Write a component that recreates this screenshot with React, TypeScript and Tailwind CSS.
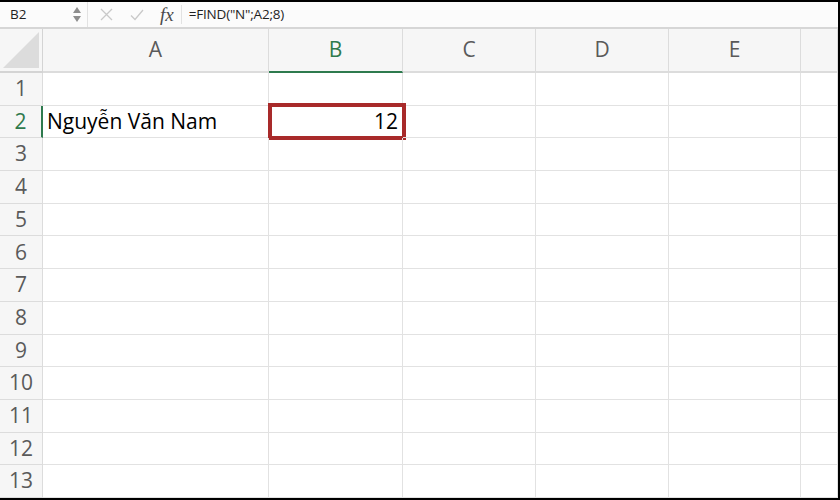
import React from 'react';

const cols = ['A', 'B', 'C', 'D', 'E', ''];
const rows = Array.from({ length: 13 }, (_, i) => i + 1);

const FormulaBar: React.FC = () => (
  <div className="flex h-[27px] shrink-0 items-center bg-[#fbfbfb] border-b-2 border-[#d6d6d6] text-[13.5px] text-[#1f1f1f]">
    <div className="flex h-full w-[88px] shrink-0 items-center border-r border-[#e2e2e2] pl-[10px] pr-[6px]">
      <span className="flex-1">B2</span>
      <div className="flex flex-col items-center gap-[3px]">
        <svg width="8" height="6" viewBox="0 0 8 6"><path d="M4 0L8 6H0z" fill="#8d8d8d" /></svg>
        <svg width="8" height="6" viewBox="0 0 8 6"><path d="M0 0H8L4 6z" fill="#8d8d8d" /></svg>
      </div>
    </div>
    <div className="flex h-full items-center pl-[12px]">
      <svg width="13" height="13" viewBox="0 0 13 13" className="mr-[17px]">
        <path d="M1 1L12 12M12 1L1 12" stroke="#c9c9c9" strokeWidth="1.3" fill="none" />
      </svg>
      <svg width="14" height="12" viewBox="0 0 14 12" className="mr-[16px]">
        <path d="M1 6.5L5 10.5L13 1" stroke="#c9c9c9" strokeWidth="1.3" fill="none" />
      </svg>
      <span className="mr-[7px] font-['Liberation_Serif',serif] text-[19px] italic leading-none text-[#4a4a4a]">fx</span>
      <div className="h-[19px] w-px bg-[#e2e2e2]" />
      <span className="pl-[7px] font-['Open_Sans',sans-serif] text-[13.5px] tracking-[-0.2px]">=FIND("N";A2;8)</span>
    </div>
  </div>
);

export default function App() {
  return (
    <div className="flex h-[500px] w-[840px] flex-col overflow-hidden border-y-2 border-r-2 border-black bg-white font-['Open_Sans',sans-serif]">
      <FormulaBar />
      <div className="grid flex-1 grid-cols-[43px_226px_134px_133px_133px_132px_1fr] grid-rows-[44px_repeat(13,1fr)]">
        {/* corner */}
        <div className="relative border-r border-b-2 border-[#d4d4d4] bg-[#f6f6f6]">
          <svg className="absolute inset-0" width="42" height="42" viewBox="0 0 42 42">
            <path d="M39 3V39H3z" fill="#dcdcdc" />
          </svg>
        </div>
        {cols.map((c, i) => (
          <div
            key={i}
            className={
              'flex items-center justify-center border-r border-b-2 bg-[#f6f6f6] text-[21px] ' +
              (c === 'B'
                ? 'border-b-[#2e7a4e] border-r-[#dcdcdc] text-[#2f7a4d]'
                : 'border-[#dcdcdc] text-[#5a5a5a]')
            }
          >
            {c}
          </div>
        ))}
        {rows.map((r) => (
          <React.Fragment key={r}>
            <div
              className={
                'flex items-center justify-center border-r border-b bg-[#f6f6f6] text-[21px] ' +
                (r === 2
                  ? 'border-r-2 border-r-[#2e7a4e] border-b-[#dcdcdc] text-[#2f7a4d]'
                  : 'border-[#dcdcdc] text-[#5a5a5a]')
              }
            >
              {r}
            </div>
            {cols.map((c, i) => (
              <div key={i} className="relative flex items-center border-r border-b border-[#e2e2e2] px-[4px] text-[21px] text-black">
                {r === 2 && c === 'A' && <span className="whitespace-nowrap">Nguyễn Văn Nam</span>}
                {r === 2 && c === 'B' && (
                  <>
                    <span className="ml-auto">12</span>
                    <div className="absolute -top-[3px] -bottom-[3px] -left-px -right-[4px] border-4 border-[#a82a2a]" />
                  </>
                )}
              </div>
            ))}
          </React.Fragment>
        ))}
      </div>
    </div>
  );
}
